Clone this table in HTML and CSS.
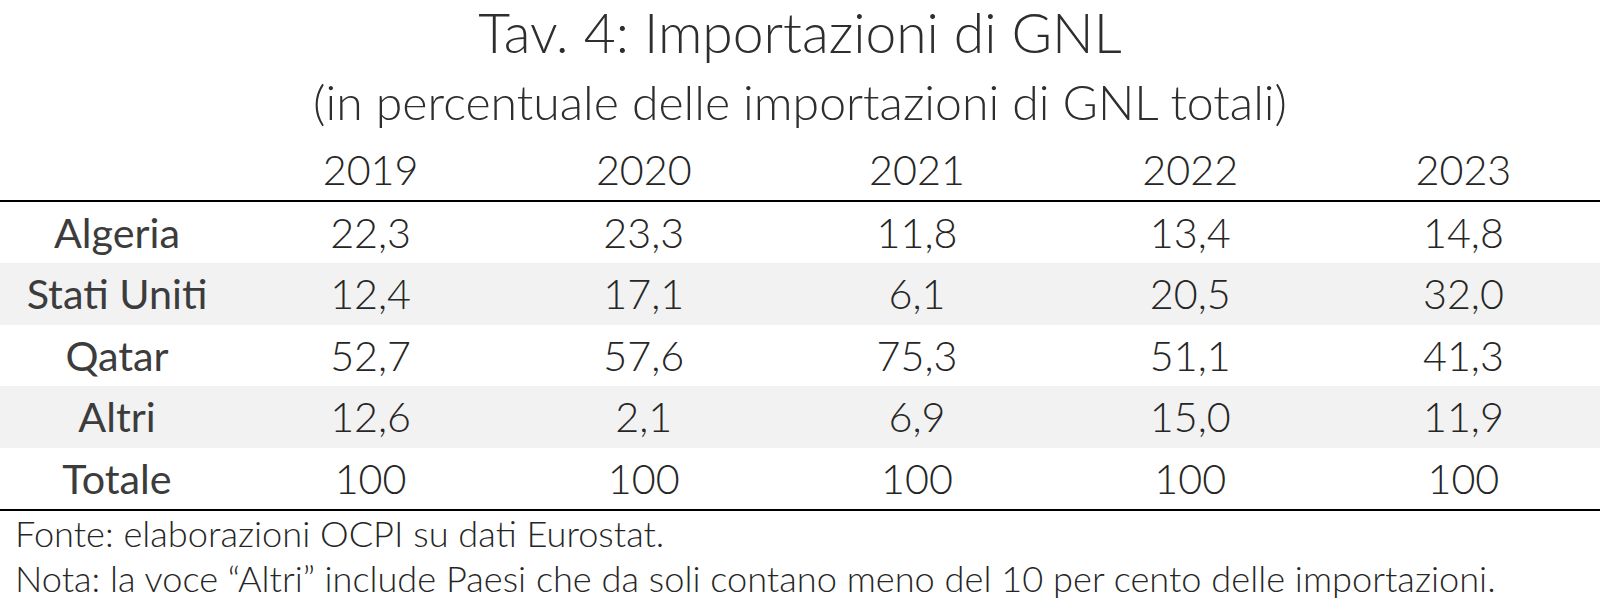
FILE: index.html
```html
<!DOCTYPE html>
<html lang="it">
<head>
<meta charset="utf-8">
<title>Tav. 4: Importazioni di GNL</title>
<link rel="stylesheet" href="styles.css">
</head>
<body>
<div class="page">
  <h1 class="title">Tav. 4: Importazioni di GNL</h1>
  <p class="subtitle">(in percentuale delle importazioni di GNL totali)</p>
  <div class="table">
    <div class="row head">
      <div class="cell label"></div>
      <div class="cell">2019</div>
      <div class="cell">2020</div>
      <div class="cell">2021</div>
      <div class="cell">2022</div>
      <div class="cell">2023</div>
    </div>
    <div class="row">
      <div class="cell label">Algeria</div>
      <div class="cell">22,3</div>
      <div class="cell">23,3</div>
      <div class="cell">11,8</div>
      <div class="cell">13,4</div>
      <div class="cell">14,8</div>
    </div>
    <div class="row alt">
      <div class="cell label">Stati Uniti</div>
      <div class="cell">12,4</div>
      <div class="cell">17,1</div>
      <div class="cell">6,1</div>
      <div class="cell">20,5</div>
      <div class="cell">32,0</div>
    </div>
    <div class="row">
      <div class="cell label">Qatar</div>
      <div class="cell">52,7</div>
      <div class="cell">57,6</div>
      <div class="cell">75,3</div>
      <div class="cell">51,1</div>
      <div class="cell">41,3</div>
    </div>
    <div class="row alt">
      <div class="cell label">Altri</div>
      <div class="cell">12,6</div>
      <div class="cell">2,1</div>
      <div class="cell">6,9</div>
      <div class="cell">15,0</div>
      <div class="cell">11,9</div>
    </div>
    <div class="row last">
      <div class="cell label">Totale</div>
      <div class="cell">100</div>
      <div class="cell">100</div>
      <div class="cell">100</div>
      <div class="cell">100</div>
      <div class="cell">100</div>
    </div>
  </div>
  <div class="notes">
    <p class="note">Fonte: elaborazioni OCPI su dati Eurostat.</p>
    <p class="note">Nota: la voce “Altri” include Paesi che da soli contano meno del 10 per cento delle importazioni.</p>
  </div>
</div>
</body>
</html>
```

FILE: styles.css
```css
html, body {
  margin: 0;
  padding: 0;
  background: #ffffff;
}

.page {
  width: 1600px;
  height: 605px;
  overflow: hidden;
  font-family: "Lato", "Open Sans", sans-serif;
  font-weight: 300;
  color: #262626;
}

.title {
  margin: 0;
  font-size: 55.2px;
  font-weight: 300;
  line-height: 64px;
  text-align: center;
  color: #2e2e2e;
}

.subtitle {
  margin: 0;
  padding-top: 9px;
  font-size: 48.2px;
  line-height: 56px;
  text-align: center;
  color: #2e2e2e;
}

.table {
  border-bottom: 2px solid #000000;
}

.row {
  display: grid;
  grid-template-columns: 234px repeat(5, 1fr);
  height: 61.4px;
  font-size: 41.3px;
  line-height: 61.4px;
}

.row.head {
  height: auto;
  padding: 15px 0 6px;
  line-height: 50px;
  border-bottom: 2px solid #000000;
}

.row.alt {
  background: #f2f2f2;
}

.cell {
  text-align: center;
  white-space: nowrap;
}

.cell.label {
  font-weight: 400;
  color: #3c3c3c;
}

.notes {
  padding-left: 15px;
}

.note {
  margin: 0;
  font-size: 36.2px;
  line-height: 45.5px;
  white-space: nowrap;
}
```
